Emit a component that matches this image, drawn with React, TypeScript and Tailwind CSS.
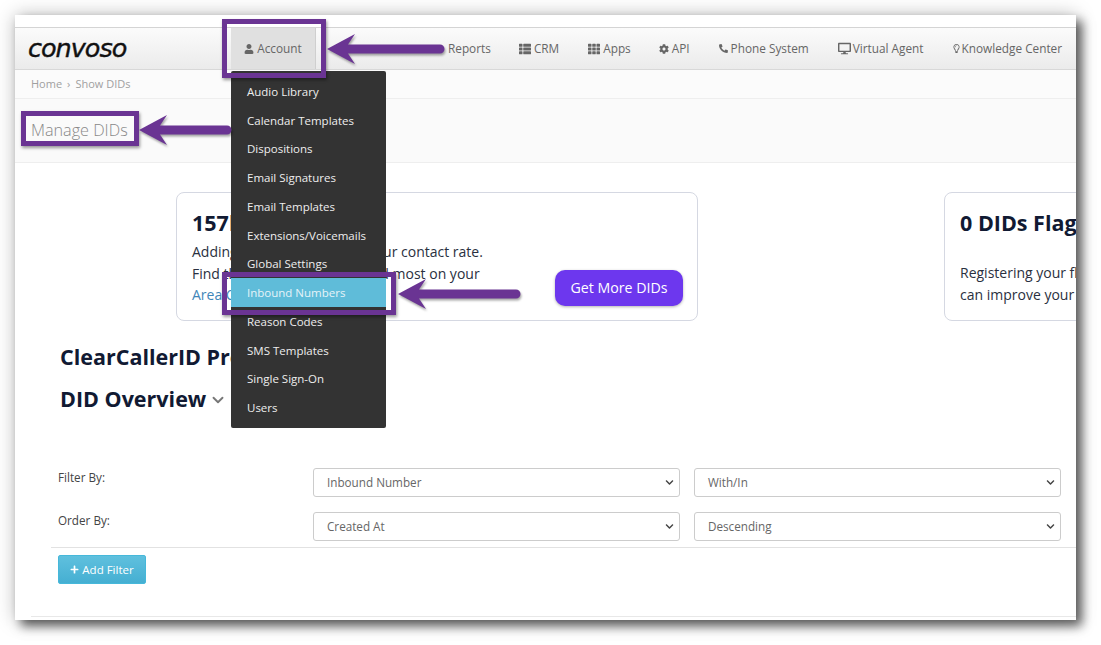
import {FaUser, FaThList, FaTh, FaCog, FaPhone, FaDesktop, FaRegLightbulb, FaPlus, FaChevronDown} from 'react-icons/fa';
import {ChevronDown} from 'lucide-react';

const navItems = [
  {label: 'Reports', icon: null, gap: 'ml-[126px]', iconGap: 'gap-[3px]'},
  {label: 'CRM', icon: <FaThList size={12} />, gap: 'ml-[28px]', iconGap: 'gap-[3px]'},
  {label: 'Apps', icon: <FaTh size={12} />, gap: 'ml-[29px]', iconGap: 'gap-[3px]'},
  {label: 'API', icon: <FaCog size={10} />, gap: 'ml-[28px]', iconGap: 'gap-[3px]'},
  {label: 'Phone System', icon: <FaPhone size={9} className="-scale-x-100" />, gap: 'ml-[29px]', iconGap: 'gap-[3px]'},
  {label: 'Virtual Agent', icon: <FaDesktop size={13} />, gap: 'ml-[29px]', iconGap: 'gap-[2px]'},
  {label: 'Knowledge Center', icon: <FaRegLightbulb size={9} />, gap: 'ml-[28px]', iconGap: 'gap-[1px]'},
];

const menuItems = [
  'Audio Library',
  'Calendar Templates',
  'Dispositions',
  'Email Signatures',
  'Email Templates',
  'Extensions/Voicemails',
  'Global Settings',
  'Inbound Numbers',
  'Reason Codes',
  'SMS Templates',
  'Single Sign-On',
  'Users',
];

function FakeSelect({label}: {label: string}) {
  return (
    <div className="w-[367px] h-[29px] shrink-0 flex items-center justify-between pl-[13px] pr-[4px] border border-[#ccc] rounded-[3px] bg-white text-[11.7px] text-[#666]">
      <span>{label}</span>
      <FaChevronDown size={9} className="text-[#444] mr-[1px]" />
    </div>
  );
}

function Arrow({left, top, length}: {left: number; top: number; length: number}) {
  // arrow head points left, art box is 30px tall
  return (
    <svg
      className="absolute drop-shadow-[1px_2px_1px_rgba(0,0,0,0.35)]"
      style={{left, top}}
      width={length}
      height={30}
      viewBox={`0 0 ${length} 30`}
    >
      <path d={`M0 15 L28 0 L21 10.5 L${length - 5} 10.5 A4.5 4.5 0 0 1 ${length - 5} 19.5 L21 19.5 L28 30 Z`} fill="#6a3493" />
    </svg>
  );
}

export default function App() {
  return (
    <div className="w-[1101px] h-[645px] bg-white pt-[15px] pl-[15px] overflow-hidden" style={{fontFamily: '"Open Sans", sans-serif'}}>
      <div className="relative w-[1061px] h-[605px] bg-white shadow-[6px_6px_10px_rgba(0,0,0,0.6),0_0_18px_rgba(0,0,0,0.25)]">
        <div className="h-full overflow-hidden flex flex-col">
          <div className="h-[13px] shrink-0 border-b border-[#d4d4d4]"></div>

          {/* Nav */}
          <div className="h-[42px] shrink-0 flex items-center bg-gradient-to-b from-[#fbfbfb] to-[#ebebeb] border-b border-[#d8d8d8] text-[11.8px] text-[#666]">
            <span className="w-[98px] ml-[13px] text-[25.5px] leading-none italic text-[#111] tracking-[-1px] [-webkit-text-stroke:0.4px_#111]" style={{fontFamily: '"DejaVu Sans", sans-serif'}}>
              convoso
            </span>
            <div className="ml-[105px] mr-[6px] w-[85px] h-full flex items-center justify-center gap-[3px] bg-[#e0e0e0] border-r border-[#cfcfcf]">
              <FaUser size={10} />
              <span>Account</span>
            </div>
            {navItems.map(item => (
              <div key={item.label} className={`flex items-center whitespace-nowrap ${item.iconGap} ${item.gap}`}>
                {item.icon}
                <span>{item.label}</span>
              </div>
            ))}
          </div>

          {/* Breadcrumb */}
          <div className="h-[29px] shrink-0 flex items-center gap-[5px] pl-[16px] pt-[1px] bg-[#fbfbfb] border-b border-[#eee] text-[11px] text-[#a0a0a0]">
            <span>Home</span>
            <span>›</span>
            <span>Show DIDs</span>
          </div>

          {/* Title */}
          <div className="h-[64px] shrink-0 flex items-center pl-[16px] pb-[1px] bg-[#fafafa] border-b border-[#eee] text-[16.2px] font-light text-[#888]">
            Manage DIDs
          </div>

          {/* Cards */}
          <div className="mt-[29px] pl-[161px] flex gap-[246px]">
            <div className="w-[522px] h-[129px] shrink-0 flex justify-between border border-[#d5d8e2] rounded-[8px] pl-[15px] pr-[14px]">
              <div className="text-[14px] leading-[21.5px] text-[#2a3040]">
                <h3 className="mt-[16px] mb-[4px] text-[21.5px] leading-[28px] font-bold text-[#111a33]">157k</h3>
                <p>Adding many DIDs may lift your contact rate.</p>
                <p>Find the area codes you called most on your</p>
                <p className="text-[#3f86b8]">Area Codes</p>
              </div>
              <button className="self-end mb-[14px] pb-[1px] w-[128px] h-[36px] rounded-[10px] bg-[#6d37ee] text-white text-[14.2px] shadow-[0_1px_3px_rgba(0,0,0,0.3)]">
                Get More DIDs
              </button>
            </div>
            <div className="w-[522px] h-[129px] shrink-0 border border-[#d5d8e2] rounded-[8px] pl-[15px] text-[14px] leading-[22px] text-[#2a3040] whitespace-nowrap">
              <h3 className="mt-[16px] mb-[25px] text-[21.5px] leading-[28px] font-bold text-[#111a33]">0 DIDs Flagged</h3>
              <p>Registering your flagged numbers</p>
              <p>can improve your contact rate.</p>
            </div>
          </div>

          {/* Headings */}
          <h2 className="mt-[22px] ml-[45px] text-[21.5px] leading-[28px] font-bold text-[#111a33]">ClearCallerID Profile</h2>
          <div className="mt-[13px] ml-[45px] flex items-center gap-[3px]">
            <h2 className="text-[21.5px] leading-[30px] font-bold text-[#111a33]">DID Overview</h2>
            <ChevronDown size={18} strokeWidth={2.5} className="text-[#777] mt-[2px]" />
          </div>

          {/* Filters */}
          <div className="mt-[54px] ml-[36px]">
            <div className="flex pl-[7px] text-[11.7px] text-[#444]">
              <span className="w-[255px] mt-[1px]">Filter By:</span>
              <div className="flex gap-[14px]">
                <FakeSelect label="Inbound Number" />
                <FakeSelect label="With/In" />
              </div>
            </div>
            <div className="mt-[15px] flex pl-[7px] text-[11.7px] text-[#444]">
              <span className="w-[255px]">Order By:</span>
              <div className="flex gap-[14px]">
                <FakeSelect label="Created At" />
                <FakeSelect label="Descending" />
              </div>
            </div>
            <div className="mt-[6px] border-t border-[#e2e2e2] pt-[7px] pl-[7px]">
              <button className="w-[88px] h-[29px] flex items-center justify-center gap-[3px] rounded-[2px] bg-gradient-to-b from-[#5fc0de] to-[#45afd2] border border-[#46b8da] text-[11.5px] text-white">
                <FaPlus size={9} />
                Add Filter
              </button>
            </div>
          </div>

          <div className="mt-[32px] ml-[16px] border-t border-[#e8e8e8]"></div>
        </div>

        {/* Account dropdown */}
        <div className="absolute left-[216px] top-[56px] w-[155px] h-[357px] pt-[6px] rounded-[2px] bg-[#333] text-[11.5px] text-[#eee]">
          {menuItems.map(item => (
            <div
              key={item}
              className={`h-[28.75px] flex items-center pl-[16px] ${item === 'Inbound Numbers' ? 'bg-[#5fbcd9] text-[#e6f3f8]' : ''}`}
            >
              {item}
            </div>
          ))}
        </div>

        {/* Annotations */}
        <div className="absolute left-[207px] top-[4px] w-[104px] h-[59px] border-[5px] border-[#6a3493] shadow-[1px_2px_3px_rgba(0,0,0,0.4)]"></div>
        <div className="absolute left-[6px] top-[96px] w-[118px] h-[35px] border-[5px] border-[#6a3493] shadow-[1px_2px_3px_rgba(0,0,0,0.4)]"></div>
        <div className="absolute left-[207px] top-[257px] w-[174px] h-[43px] border-[5px] border-[#6a3493] shadow-[1px_2px_3px_rgba(0,0,0,0.4)]"></div>
        <Arrow left={312} top={19} length={118} />
        <Arrow left={124} top={100} length={93} />
        <Arrow left={383} top={264} length={123} />
      </div>
    </div>
  );
}
